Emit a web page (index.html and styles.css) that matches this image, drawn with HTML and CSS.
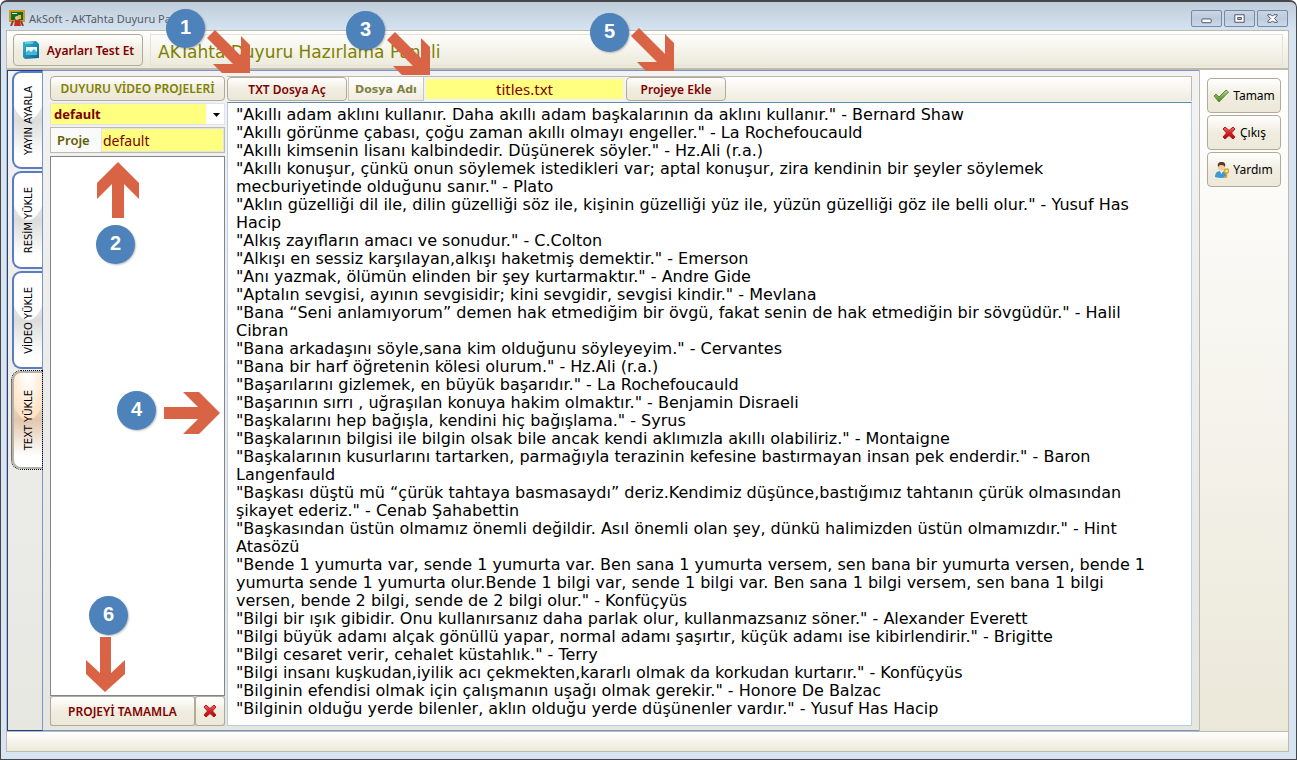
FILE: index.html
```html
<!DOCTYPE html>
<html lang="tr">
<head>
<meta charset="utf-8">
<title>AkSoft - AKTahta Duyuru Paneli</title>
<link rel="stylesheet" href="styles.css">
</head>
<body>
<svg class="defs" aria-hidden="true">
  <defs>
    <linearGradient id="redGrad" x1="0" y1="0" x2="0" y2="1"><stop offset="0" stop-color="#f07070"/><stop offset=".5" stop-color="#d31f22"/><stop offset="1" stop-color="#a80d12"/></linearGradient>
    <linearGradient id="greenGrad" x1="0" y1="0" x2="0" y2="1"><stop offset="0" stop-color="#b4d68c"/><stop offset="1" stop-color="#4b8422"/></linearGradient>
    <linearGradient id="blueGrad" x1="0" y1="0" x2="1" y2="1"><stop offset="0" stop-color="#35b9d8"/><stop offset="1" stop-color="#08628c"/></linearGradient>
    <symbol id="cross" viewBox="0 0 14 14"><path d="M1 3 L3 1 L7 4.500 L11 1 L13 3 L9.500 7 L13 11 L11 13 L7 9.500 L3 13 L1 11 L4.500 7Z" fill="url(#redGrad)" stroke="#b3191c" stroke-width="1" stroke-linejoin="round"/></symbol>
  </defs>
</svg>
<div class="window">
  <header class="titlebar">
    <svg class="app-icon" viewBox="0 0 16 16" aria-hidden="true"><rect x="1" y="1" width="14" height="10" fill="#176b20" stroke="#c79a34" stroke-width="2"/><rect x="3" y="3" width="5" height="1" fill="#dfe8c8"/><path d="M9 5h3v4H9z" fill="#e7b45a"/><path d="M4 11l-2 5M12 11l2 5" stroke="#8d3c1b" stroke-width="2"/><path d="M6 10h5l1 6H5z" fill="#c2311f"/><circle cx="8" cy="8" r="2" fill="#f0c48c"/></svg>
    <span class="title">AkSoft - AKTahta Duyuru Paneli</span>
    <div class="win-controls">
      <button type="button" aria-label="Küçült"><svg viewBox="0 0 30 16"><rect x="10" y="8.500" width="10" height="4" rx="1" fill="#fff" stroke="#464a62"/></svg></button>
      <button type="button" aria-label="Ekranı kapla"><svg viewBox="0 0 30 16"><path fill-rule="evenodd" d="M10 4h10v8h-10z M13 7h4v2h-4z" fill="#fff" stroke="#464a62"/></svg></button>
      <button type="button" aria-label="Kapat"><svg viewBox="0 0 30 16"><path d="M10 4h3.500l1.500 1.500 1.500-1.500h3.500v1l-3 3 3 3v1h-3.500l-1.500-1.500-1.500 1.500h-3.500v-1l3-3-3-3z" fill="#fff" stroke="#464a62"/></svg></button>
    </div>
  </header>
  <div class="client">
    <div class="toolbar">
      <button type="button" class="btn test-btn"><svg viewBox="0 0 18 20" width="18" height="20" aria-hidden="true"><path d="M1 2l13-1 3 3v14l-14 1-2-2z" fill="url(#blueGrad)"/><rect x="4" y="7" width="11" height="8" fill="#e9fbff"/><path d="M4 15v-3l3-2 2 2 3-3 3 3v3z" fill="#47b6d2"/><path d="M3 3h8" stroke="#9be8f5"/></svg>Ayarları Test Et</button>
      <h1 class="banner">AKTahta Duyuru Hazırlama Paneli</h1>
    </div>
    <div class="body">
      <nav class="tabs" aria-label="Sekmeler">
        <button type="button" class="tab"><span>YAYIN AYARLA</span></button>
        <button type="button" class="tab"><span>RESİM YÜKLE</span></button>
        <button type="button" class="tab"><span>VİDEO YÜKLE</span></button>
        <button type="button" class="tab tab-active"><span>TEXT YÜKLE</span></button>
      </nav>
      <main class="page">
        <section class="projects">
          <button type="button" class="btn olive">DUYURU VİDEO PROJELERİ</button>
          <div class="combo">
            <select aria-label="Duyuru video projeleri"><option>default</option></select>
            <svg viewBox="0 0 7 4" aria-hidden="true"><path d="M0 0h7L3.500 4z"/></svg>
          </div>
          <div class="field">
            <label for="proje">Proje</label>
            <input id="proje" type="text" value="default">
          </div>
          <div class="list"></div>
          <div class="actions">
            <button type="button" class="btn finish">PROJEYİ TAMAMLA</button>
            <button type="button" class="btn remove" aria-label="Sil"><svg width="14" height="14"><use href="#cross"/></svg></button>
          </div>
        </section>
        <section class="editor">
          <div class="filebar">
            <button type="button" class="btn open-btn">TXT Dosya Aç</button>
            <label class="file-label" for="dosya">Dosya Adı</label>
            <input id="dosya" type="text" value="titles.txt">
            <button type="button" class="btn add-btn">Projeye Ekle</button>
          </div>
          <textarea class="quotes" aria-label="Metin" spellcheck="false">"Akıllı adam aklını kullanır. Daha akıllı adam başkalarının da aklını kullanır." - Bernard Shaw
"Akıllı görünme çabası, çoğu zaman akıllı olmayı engeller." - La Rochefoucauld
"Akıllı kimsenin lisanı kalbindedir. Düşünerek söyler." - Hz.Ali (r.a.)
"Akıllı konuşur, çünkü onun söylemek istedikleri var; aptal konuşur, zira kendinin bir şeyler söylemek mecburiyetinde olduğunu sanır." - Plato
"Aklın güzelliği dil ile, dilin güzelliği söz ile, kişinin güzelliği yüz ile, yüzün güzelliği göz ile belli olur." - Yusuf Has Hacip
"Alkış zayıfların amacı ve sonudur." - C.Colton
"Alkışı en sessiz karşılayan,alkışı haketmiş demektir." - Emerson
"Anı yazmak, ölümün elinden bir şey kurtarmaktır." - Andre Gide
"Aptalın sevgisi, ayının sevgisidir; kini sevgidir, sevgisi kindir." - Mevlana
"Bana “Seni anlamıyorum” demen hak etmediğim bir övgü, fakat senin de hak etmediğin bir sövgüdür." - Halil Cibran
"Bana arkadaşını söyle,sana kim olduğunu söyleyeyim." - Cervantes
"Bana bir harf öğretenin kölesi olurum." - Hz.Ali (r.a.)
"Başarılarını gizlemek, en büyük başarıdır." - La Rochefoucauld
"Başarının sırrı , uğraşılan konuya hakim olmaktır." - Benjamin Disraeli
"Başkalarını hep bağışla, kendini hiç bağışlama." - Syrus
"Başkalarının bilgisi ile bilgin olsak bile ancak kendi aklımızla akıllı olabiliriz." - Montaigne
"Başkalarının kusurlarını tartarken, parmağıyla terazinin kefesine bastırmayan insan pek enderdir." - Baron Langenfauld
"Başkası düştü mü “çürük tahtaya basmasaydı” deriz.Kendimiz düşünce,bastığımız tahtanın çürük olmasından şikayet ederiz." - Cenab Şahabettin
"Başkasından üstün olmamız önemli değildir. Asıl önemli olan şey, dünkü halimizden üstün olmamızdır." - Hint Atasözü
"Bende 1 yumurta var, sende 1 yumurta var. Ben sana 1 yumurta versem, sen bana bir yumurta versen, bende 1 yumurta sende 1 yumurta olur.Bende 1 bilgi var, sende 1 bilgi var. Ben sana 1 bilgi versem, sen bana 1 bilgi versen, bende 2 bilgi, sende de 2 bilgi olur." - Konfüçyüs
"Bilgi bir ışık gibidir. Onu kullanırsanız daha parlak olur, kullanmazsanız söner." - Alexander Everett
"Bilgi büyük adamı alçak gönüllü yapar, normal adamı şaşırtır, küçük adamı ise kibirlendirir." - Brigitte
"Bilgi cesaret verir, cehalet küstahlık." - Terry
"Bilgi insanı kuşkudan,iyilik acı çekmekten,kararlı olmak da korkudan kurtarır." - Konfüçyüs
"Bilginin efendisi olmak için çalışmanın uşağı olmak gerekir." - Honore De Balzac
"Bilginin olduğu yerde bilenler, aklın olduğu yerde düşünenler vardır." - Yusuf Has Hacip</textarea>
        </section>
      </main>
      <aside class="side">
        <button type="button" class="btn"><svg width="16" height="14" viewBox="0 0 16 14" aria-hidden="true"><path d="M1 7l2-2 3 3 7-7 2.500 2L6 13z" fill="url(#greenGrad)" stroke="#5d8f3a" stroke-linejoin="round"/></svg>Tamam</button>
        <button type="button" class="btn"><svg width="14" height="14" aria-hidden="true"><use href="#cross"/></svg>Çıkış</button>
        <button type="button" class="btn"><svg width="14" height="16" viewBox="0 0 14 16" aria-hidden="true"><path d="M0 15c0-4 2-6 6-6s6 2 6 6q-6 2-12 0z" fill="#3f9ad2"/><path d="M5 9l1.500 3L8 9z" fill="#fff"/><circle cx="6.500" cy="5" r="3.500" fill="#f4c9a0"/><path d="M3 5C2 0 5 0 7 0s4 1 3 5C9 3 7 3 5 3z" fill="#553a2a"/><circle cx="11.500" cy="9" r="2" fill="none" stroke="#e8a413" stroke-width="1.500"/><path d="M11.500 11v4h-2" fill="none" stroke="#e8a413" stroke-width="1.500"/></svg>Yardım</button>
      </aside>
    </div>
    <footer class="status"></footer>
  </div>
  <svg class="arrows" width="760" height="700" viewBox="0 0 760 700" aria-hidden="true">
    <g fill="#d96345">
      <path d="M215 30L241 56V36L250 45V73H222L213 64H233L207 38Z"/>
      <path d="M395 32L421 58V38L430 47V75H402L393 66H413L387 40Z"/>
      <path d="M639 28L665 54V34L674 43V71H646L637 62H657L631 36Z"/>
      <path d="M118 162L139 183V199L124 184V218H112V184L97 199V183Z"/>
      <path d="M220 413L199 434H183L198 419H164V407H198L183 392H199Z"/>
      <path d="M105 692L86 674V660L100 673V637H111V673L125 660V674Z"/>
    </g>
  </svg>
  <span class="badge b1">1</span>
  <span class="badge b2">2</span>
  <span class="badge b3">3</span>
  <span class="badge b4">4</span>
  <span class="badge b5">5</span>
  <span class="badge b6">6</span>
</div>
</body>
</html>
```
FILE: styles.css
```css
* { box-sizing: border-box; }
body { margin: 0; background: #fff; font: 12px "Noto Sans", "Open Sans", sans-serif; color: #000; }
button, input, select, textarea { font: inherit; margin: 0; border-radius: 0; }
.defs { position: absolute; width: 0; height: 0; }

.window {
  position: relative;
  display: flex; flex-direction: column;
  height: 100vh;
  padding: 0 7px 7px 5px;
  border: 1px solid #47474b; border-top-width: 2px;
  border-radius: 7px 7px 0 0;
  background: linear-gradient(#bfcddb, #d7e4f2 30px);
}
.titlebar { display: flex; align-items: center; height: 28px; flex: none; padding: 4px 1px 0 3px; }
.app-icon { width: 16px; height: 16px; margin-right: 4px; }
.title { flex: 1; color: #555b68; font-size: 11px; }
.win-controls { display: flex; gap: 2px; }
.win-controls button {
  width: 31px; height: 17px; padding: 0;
  border: 1px solid #7888a8; border-radius: 2px;
  background: linear-gradient(#c9d6e4, #bccbdc 50%, #ccd9e7);
}
.win-controls svg { display: block; width: 29px; height: 15px; }

.client { flex: 1; min-height: 0; display: flex; flex-direction: column; border: 1px solid #bebaae; }
.toolbar {
  display: flex; gap: 7px; flex: none; height: 39px; padding: 3px 5px 2px 6px;
  background: linear-gradient(#fff, #ece9d9);
  border-bottom: 2px solid #bebaae;
}
.btn {
  display: flex; align-items: center; justify-content: center; gap: 4px; padding: 0;
  border: 1px solid #b0ab99; border-radius: 4px;
  background: linear-gradient(#fff, #f0ede0 50%, #ece9da);
  color: #000;
}
.test-btn { width: 130px; gap: 7px; color: #800000; font-weight: 600; font-size: 12px; }
.banner {
  flex: 1; margin: 0; padding-left: 7px;
  border: 1px solid #e6e3d6;
  font: 17px/34px "DejaVu Sans", sans-serif; color: #808000;
}

.body { flex: 1; min-height: 0; display: flex; }
.tabs {
  width: 36px; flex: none; display: flex; flex-direction: column; gap: 2px;
  border: 1px solid #1d3f93; border-right-color: #7b93c8;
  padding-left: 4px;
  background: linear-gradient(#f2f2f2, #e7e7e2);
}
.tab {
  position: relative;
  height: 98px; padding: 0;
  border: 2px solid #5d7bc4; border-right: 0; border-radius: 9px 0 0 9px;
  background:
    radial-gradient(ellipse 20px 48px at 50% 0, #fff 96%, transparent 100%),
    linear-gradient(#fff, #dcdcda 50%, #fff 88%);
  color: #000;
  display: flex; align-items: center; justify-content: center;
}
.tab span { writing-mode: vertical-rl; transform: rotate(180deg); white-space: nowrap; font: 10px "DejaVu Sans", sans-serif; }
.tab-active {
  border-color: #b6b2a6; outline: 1px dotted #000;
  background:
    radial-gradient(ellipse 20px 48px at 50% 0, #fff 10%, #ffe2c2 96%, transparent 100%),
    linear-gradient(#fff, #e2c7ae 50%, #fff 88%);
}

.page {
  flex: 1; min-width: 0; display: flex; gap: 2px; padding: 5px 7px 4px;
  border-top: 1px solid #7b93c8; border-bottom: 1px solid #7b93c8;
  background: linear-gradient(#f2f2f2, #e5e6e0);
}
.projects { width: 175px; flex: none; display: flex; flex-direction: column; }
.olive { height: 25px; flex: none; color: #808000; font-weight: 600; }
.combo { position: relative; flex: none; margin-top: 2px; height: 22px; background: #fff; border: 1px solid #e2e3ea; }
.combo select {
  appearance: none; width: 100%; height: 20px; padding: 0 3px; border: 0;
  background: linear-gradient(90deg, #ffff80 calc(100% - 18px), #fff calc(100% - 18px));
  color: #800000; font: bold 13px "Noto Sans", sans-serif;
}
.combo svg { position: absolute; right: 4px; top: 9px; width: 7px; height: 4px; pointer-events: none; }
.field { flex: none; display: flex; margin-top: 2px; height: 26px; border: 1px solid #bebaae; background: #fafafa; }
.field label { width: 50px; padding-left: 6px; line-height: 24px; color: #606000; font-weight: 600; font-size: 13px; }
.field input { flex: 1; min-width: 0; padding: 0 1px; border: 1px solid #dfe3ee; background: #ffff80; color: #800000; font-size: 14px; }
.list { flex: 1; margin-top: 3px; border: 1px solid #82858e; background: #fff; }
.actions { flex: none; display: flex; height: 30px; background: #cfcbbb; }
.actions .btn { border-radius: 3px; color: #800000; font-weight: 600; }
.finish { flex: 1; }
.remove { width: 30px; }

.editor { flex: 1; min-width: 0; display: flex; flex-direction: column; }
.filebar {
  flex: none; display: flex; height: 25px;
  border-top: 1px solid #bebaae; border-right: 1px solid #bebaae;
  background: linear-gradient(#fff, #efecdf);
}
.filebar .btn { color: #800000; font-weight: 600; }
.open-btn { width: 120px; }
.file-label {
  width: 76px; margin-left: 1px; text-align: center;
  border: 1px solid #cbc8ba; border-top: 0; color: #808040; font: bold 11px/26px "DejaVu Sans", sans-serif;
}
.filebar input {
  width: 201px; margin-right: 1px; padding: 0; text-align: center;
  border: 2px solid #f0f2f8; background: #ffff80; color: #800000; font-size: 15px;
}
.add-btn { width: 100px; }
.quotes {
  flex: 1; min-height: 0; width: 100%; margin-top: 1px; padding: 3px 32px 0 8px; resize: none; overflow: hidden; outline: 0;
  border: 1px solid #b5cfe7; border-top-color: #5a8cb4;
  background: #fff; color: #000;
  font: 16px/18px "DejaVu Sans", sans-serif;
}
.side {
  width: 89px; flex: none; display: flex; flex-direction: column; gap: 2px; padding: 8px 7px;
  border-left: 1px solid #bebaae;
  background: linear-gradient(#fff, #ebe8d9);
}
.side .btn { height: 35px; flex: none; }
.status { flex: none; height: 20px; border-top: 1px solid #bebaae; background: linear-gradient(#fff, #ece9d9); }

/* numbered callouts lying over the window */
.arrows { position: absolute; left: -1px; top: -2px; pointer-events: none; }
.badge {
  position: absolute; width: 39px; height: 39px; border-radius: 50%;
  background: #4d82ba; color: #fff; box-shadow: 1px 1px 2px rgba(0, 0, 0, .25);
  font: bold 20px/37px "Liberation Sans", Arial, sans-serif; text-align: center;
}
.b1 { left: 165px; top: 7px; }
.b2 { left: 95px; top: 223px; }
.b3 { left: 345px; top: 9px; }
.b4 { left: 116px; top: 389px; }
.b5 { left: 589px; top: 11px; }
.b6 { left: 88px; top: 594px; }
```
